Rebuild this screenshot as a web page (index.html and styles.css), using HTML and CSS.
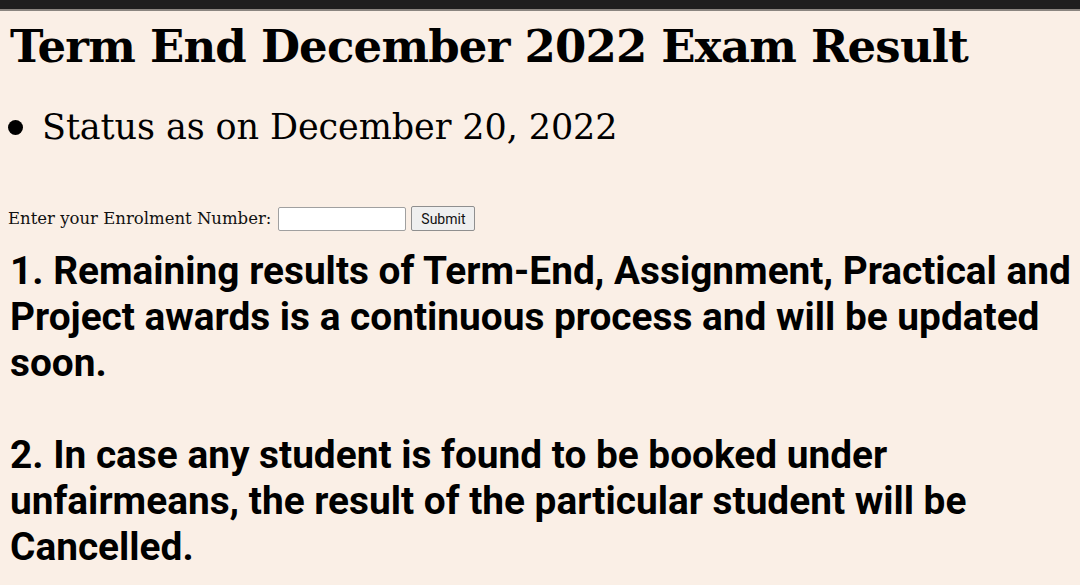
FILE: index.html
```html
<!DOCTYPE html>
<html>
<head>
<meta charset="utf-8">
<link rel="stylesheet" href="styles.css">
</head>
<body>
<div class="topbar"></div>
<main class="page">
  <h1 class="title">Term End December 2022 Exam Result</h1>
  <ul class="status">
    <li class="status-item">Status as on December 20, 2022</li>
  </ul>
  <form class="lookup">
    <label class="lookup-label">Enter your Enrolment Number:</label>
    <input class="lookup-input" type="text">
    <button class="lookup-btn" type="button">Submit</button>
  </form>
  <div class="notes">
    <p class="note">1. Remaining results of Term-End, Assignment, Practical and Project awards is a continuous process and will be updated soon.</p>
    <p class="note">2. In case any student is found to be booked under unfairmeans, the result of the particular student will be Cancelled.</p>
  </div>
</main>
</body>
</html>
```
FILE: styles.css
```css
html, body {
  margin: 0;
  padding: 0;
  background: #faefe6;
}
.topbar {
  height: 9px;
  background: #1e1e1e;
  border-bottom: 2px solid #8a8580;
}
.page {
  padding: 0 4px 0 10px;
  color: #000;
}
.title {
  font-family: "DejaVu Serif", serif;
  font-weight: bold;
  font-size: 45px;
  line-height: 64px;
  margin: 4px 0 0 0;
  letter-spacing: -0.8px;
}
.status {
  list-style: none;
  margin: 22px 0 0 0;
  padding-left: 32px;
  font-family: "DejaVu Serif", serif;
  font-size: 35px;
  line-height: 52px;
  letter-spacing: -0.1px;
}
.status-item {
  position: relative;
}
.status-item::before {
  content: "";
  position: absolute;
  left: -34px;
  top: 19px;
  width: 15px;
  height: 15px;
  border-radius: 50%;
  background: #000;
}
.lookup {
  margin: 53px 0 0 -2px;
  display: flex;
  align-items: center;
  font-family: "DejaVu Serif", serif;
  font-size: 16.5px;
  color: #111;
}
.lookup-label {
  margin-right: 7px;
}
.lookup-input {
  width: 128px;
  height: 24px;
  margin: 0;
  box-sizing: border-box;
  border: 1px solid #a0a0a0;
  border-radius: 2px;
  background: #fff;
}
.lookup-btn {
  margin-left: 5px;
  width: 64px;
  height: 25px;
  padding: 0;
  font-family: "Roboto", sans-serif;
  font-size: 14px;
  color: #111;
  background: #efefef;
  border: 1px solid #8f8f8f;
  border-radius: 2px;
}
.notes {
  margin-top: 17px;
  font-family: "Roboto", sans-serif;
  font-weight: bold;
  font-size: 38.8px;
  line-height: 46px;
}
.note {
  margin: 0 0 46px 0;
}
.note:last-child {
  margin-bottom: 0;
}
```
